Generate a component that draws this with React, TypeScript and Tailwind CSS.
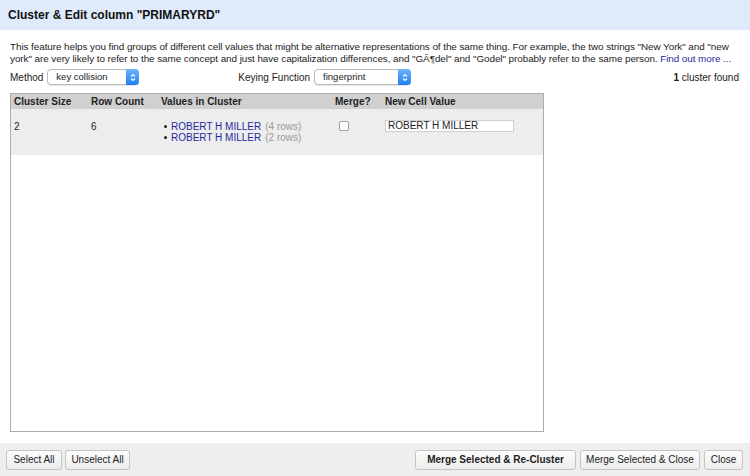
import React from "react";

function Select({ value, width }: { value: string; width: string }) {
  return (
    <div className={`relative h-[16px] ${width} rounded-[4px] border border-[#b9b9b9] bg-white pl-[8px] text-[9.5px] leading-[14px] text-[#222] shadow-[0_1px_1px_rgba(0,0,0,0.1)]`}>
      {value}
      <div className="absolute right-[-1px] top-[-1px] flex h-[16px] w-[13px] items-center justify-center rounded-r-[4px] bg-gradient-to-b from-[#6cb3fa] to-[#1f7cf3]">
        <svg width="6" height="9" viewBox="0 0 6 9">
          <path d="M1 3.5 L3 1.5 L5 3.5" stroke="white" strokeWidth="1.1" fill="none" />
          <path d="M1 5.5 L3 7.5 L5 5.5" stroke="white" strokeWidth="1.1" fill="none" />
        </svg>
      </div>
    </div>
  );
}

function Btn({ children, bold, width }: { children: React.ReactNode; bold?: boolean; width: string }) {
  return (
    <button className={`h-[20px] ${width} rounded-[3px] border border-[#c4c4c4] bg-gradient-to-b from-[#fdfdfd] to-[#ececec] text-[10px] text-[#222] ${bold ? "font-bold" : ""}`}>
      {children}
    </button>
  );
}

export default function App() {
  return (
    <div className="flex h-[476px] w-[750px] flex-col bg-white font-['Liberation_Sans',Arial,sans-serif] text-[10px] text-[#222]">
      <div className="flex h-[30px] items-center bg-[#dfeafb] pl-[8px] text-[12px] font-bold text-[#111]">
        Cluster &amp; Edit column "PRIMARYRD"
      </div>
      <div className="flex flex-1 flex-col px-[10px] pt-[11px]">
        <p className="-mr-[6px] text-[9.9px] leading-[12px] tracking-[-0.06px]">
          This feature helps you find groups of different cell values that might be alternative representations of the same thing. For example, the two strings "New York" and "new york" are very likely to refer to the same concept and just have capitalization differences, and "GÃ¶del" and "Godel" probably refer to the same person.{" "}
          <span className="text-[#1f2b9c]">Find out more ...</span>
        </p>
        <div className="mt-[4px] flex h-[16px] items-center">
          <span>Method</span>
          <div className="ml-[4px]">
            <Select value="key collision" width="w-[92px]" />
          </div>
          <span className="ml-[99px]">Keying Function</span>
          <div className="ml-[4px]">
            <Select value="fingerprint" width="w-[97px]" />
          </div>
          <span className="ml-auto pr-[1px]">
            <b>1</b> cluster found
          </span>
        </div>
        <div className="mt-[8px] h-[339px] w-[534px] border border-[#acacac] bg-white">
          <div className="flex h-[15px] items-center bg-[#d0d0d0] font-bold text-[#222]">
            <div className="w-[80px] pl-[3px]">Cluster Size</div>
            <div className="w-[70px]">Row Count</div>
            <div className="w-[174px]">Values in Cluster</div>
            <div className="w-[50px]">Merge?</div>
            <div>New Cell Value</div>
          </div>
          <div className="flex h-[46px] bg-[#ededed] pt-[12px]">
            <div className="w-[80px] pl-[3px] leading-[11px]">2</div>
            <div className="w-[70px] leading-[11px]">6</div>
            <div className="w-[174px] leading-[11px]">
              <div className="flex items-center">
                <span className="ml-[3px] mr-[4px] inline-block h-[3px] w-[3px] rounded-full bg-[#222]" />
                <span className="text-[#1f2b9c]">ROBERT H MILLER</span>
                <span className="ml-[4px] text-[#9a9a9a]">(4 rows)</span>
              </div>
              <div className="flex items-center">
                <span className="ml-[3px] mr-[4px] inline-block h-[3px] w-[3px] rounded-full bg-[#222]" />
                <span className="text-[#1f2b9c]">ROBERT H MILLER</span>
                <span className="ml-[4px] text-[#9a9a9a]">(2 rows)</span>
              </div>
            </div>
            <div className="w-[50px]">
              <div className="ml-[4px] mt-[0px] h-[10px] w-[10px] rounded-[2px] border border-[#a0a0a0] bg-white" />
            </div>
            <div>
              <div className="-mt-[1px] h-[12px] w-[129px] border border-[#cfcfcf] bg-white pl-[2px] text-[10px] leading-[10px]">
                ROBERT H MILLER
              </div>
            </div>
          </div>
        </div>
      </div>
      <div className="flex h-[33px] items-center bg-[#eeeeee] px-[6px]">
        <Btn width="w-[56px]">Select All</Btn>
        <div className="ml-[3px]">
          <Btn width="w-[65px]">Unselect All</Btn>
        </div>
        <div className="ml-auto mr-[1px] flex gap-[4px]">
          <Btn bold width="w-[161px]">Merge Selected &amp; Re-Cluster</Btn>
          <Btn width="w-[120px]">Merge Selected &amp; Close</Btn>
          <Btn width="w-[39px]">Close</Btn>
        </div>
      </div>
    </div>
  );
}
